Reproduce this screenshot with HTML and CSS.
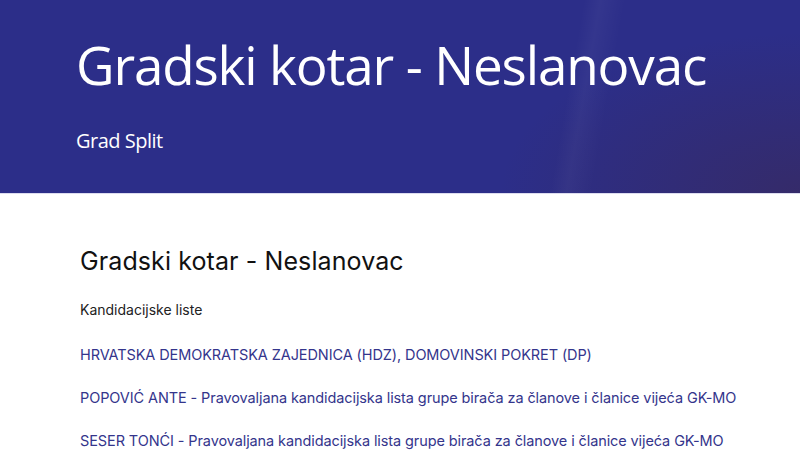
FILE: index.html
```html
<!DOCTYPE html>
<html>

<head>
    <title>Gradski kotar - Neslanovac</title>
    <link rel="stylesheet" href="styles.css">
</head>

<body>

    <div class="banner">
        <h1>Gradski kotar - Neslanovac</h1>
        <p class="subtitle">Grad Split</p>
    </div>

    <div class="content">
        <h2>Gradski kotar - Neslanovac</h2>
        <p class="lead">Kandidacijske liste</p>

        <ul class="lists">
            <li><a href="#">HRVATSKA DEMOKRATSKA ZAJEDNICA (HDZ), DOMOVINSKI POKRET (DP)</a></li>
            <li><a href="#">POPOVIĆ ANTE - Pravovaljana kandidacijska lista grupe birača za članove i članice vijeća GK-MO</a></li>
            <li><a href="#">SESER TONĆI - Pravovaljana kandidacijska lista grupe birača za članove i članice vijeća GK-MO</a></li>
        </ul>
    </div>

</body>

</html>
```

FILE: styles.css
```css
body {
    margin: 0;
    background-color: #fff;
    font-family: Inter, "Liberation Sans", sans-serif;
}

.banner {
    height: 194px;
    box-sizing: border-box;
    padding: 33px 0 0 76px;
    background-color: #2c2e89;
    background-image:
        radial-gradient(ellipse 300px 160px at 100% 100%, rgba(60, 40, 80, 0.55), rgba(60, 40, 80, 0)),
        linear-gradient(100deg, rgba(255, 255, 255, 0) 70%, rgba(255, 255, 255, 0.04) 72%, rgba(255, 255, 255, 0) 75%);
    border-bottom: 1px solid #dcdcef;
    color: #fff;
}

.banner h1 {
    margin: 0;
    font-family: "Open Sans", sans-serif;
    font-weight: 400;
    font-size: 53px;
    line-height: 64px;
    letter-spacing: -1.15px;
}

.subtitle {
    margin: 30px 0 0 0;
    font-family: "Open Sans", sans-serif;
    font-weight: 500;
    font-size: 20px;
    letter-spacing: -0.5px;
}

.content {
    padding: 52px 0 0 80px;
}

.content h2 {
    margin: 0;
    font-weight: 400;
    font-size: 25px;
    line-height: 30px;
    letter-spacing: 0.1px;
    color: #111;
}

.lead {
    margin: 25px 0 0 0;
    font-size: 14px;
    color: #222;
}

.lists {
    list-style: none;
    margin: 26px 0 0 0;
    padding: 0;
}

.lists li {
    height: 43px;
}

.lists a {
    font-size: 14.5px;
    letter-spacing: -0.1px;
    color: #34358c;
    text-decoration: none;
}
```
